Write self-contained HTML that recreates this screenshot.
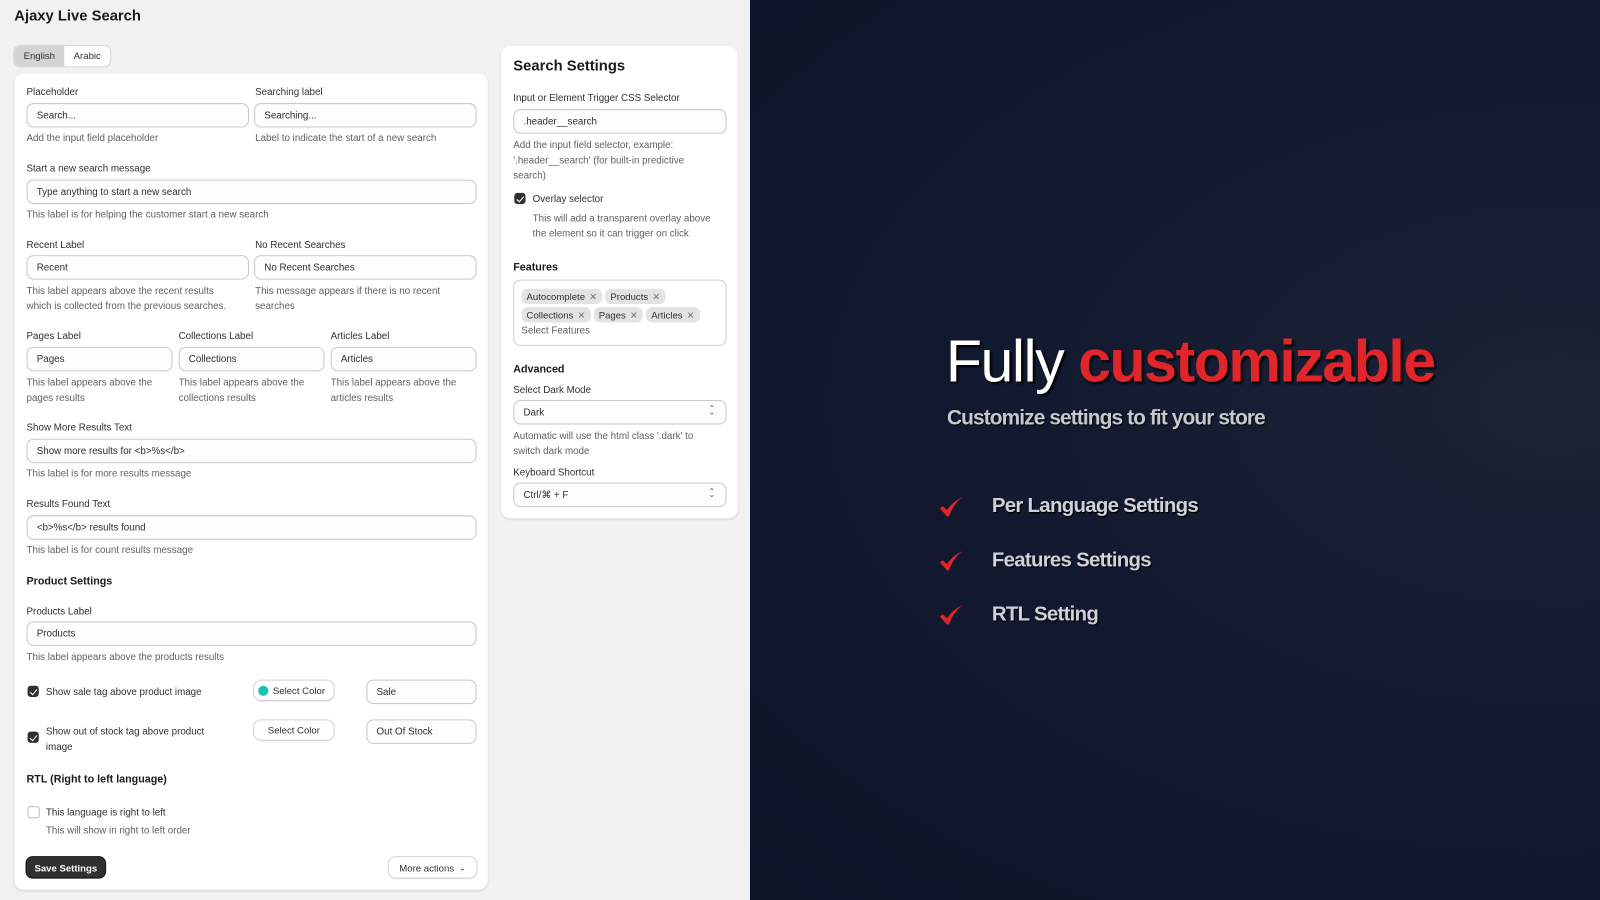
<!DOCTYPE html>
<html><head><meta charset="utf-8"><style>
*{margin:0;padding:0;box-sizing:border-box}
html,body{width:1600px;height:900px;overflow:hidden;background:#f1f1f1}
#w{position:absolute;left:0;top:0;width:1568px;height:882px;transform:scale(1.020408);transform-origin:0 0;font-family:"Liberation Sans",Arial,sans-serif}
.l{position:absolute;left:0;top:0;width:735px;height:882px;background:#f1f1f1}
.d{position:absolute;left:735px;top:0;width:833px;height:882px;background:radial-gradient(ellipse at 95% 45%,#1d2236 0%,#131a30 45%,#0e1428 100%)}
.t{position:absolute;font-size:9.6px;line-height:12px;color:#303030;white-space:nowrap}
.h{color:#616161}
.b{font-weight:bold;color:#1a1a1a;font-size:10.5px}
.card{position:absolute;background:#fff;border-radius:9px;box-shadow:0 1px 2px rgba(0,0,0,.12)}
.in{position:absolute;border:1px solid #c9c9c9;border-radius:7px;background:#fdfdfd;font-size:9.6px;color:#303030;padding-left:9px;display:flex;align-items:center;height:24px}
.cb{position:absolute;width:11px;height:11px;border-radius:3px;background:#303030}
.cb:after{content:"";position:absolute;left:3.5px;top:1.5px;width:3px;height:5.5px;border:solid #fff;border-width:0 1.6px 1.6px 0;transform:rotate(40deg)}
.btn{position:absolute;border-radius:7px;background:#fff;box-shadow:0 0 0 1px #d4d4d4,0 1px 1px rgba(0,0,0,.15);font-size:9.4px;color:#303030;display:flex;align-items:center;justify-content:center}
.tag{display:inline-block;background:#e3e3e3;border-radius:6px;font-size:9.4px;color:#303030;padding:2px 5px;margin-right:3px;line-height:11px}
.tag i{font-style:normal;color:#777;margin-left:4px}
.sel:after{content:"⌃";position:absolute;right:10px;top:3px;font-size:8px;color:#555}
.sel:before{content:"⌄";position:absolute;right:10px;top:6px;font-size:8px;color:#555}
.li{position:absolute;left:972px;font-size:20px;font-weight:bold;color:#cfd1d8;text-shadow:1px 1px 1px #000;letter-spacing:-0.7px}
.ck{position:absolute;left:920px;width:24px;height:22px}
</style></head><body><div id="w">
<div class="l">
<div class="t" style="left:14px;top:7px;font-size:14.5px;line-height:18px;font-weight:bold;color:#1a1a1a">Ajaxy Live Search</div>
<div style="position:absolute;left:14px;top:45px;width:94px;height:20px;border-radius:6px;background:#fff;box-shadow:0 0 0 1px #d4d4d4;overflow:hidden">
<div style="position:absolute;left:0;top:0;width:49px;height:20px;background:#d4d4d4;font-size:9.4px;color:#303030;text-align:center;line-height:20px">English</div>
<div style="position:absolute;left:49px;top:0;width:45px;height:20px;font-size:9.4px;color:#303030;text-align:center;line-height:20px">Arabic</div></div>
<div class="card" style="left:14px;top:72px;width:464px;height:800px"></div>
<div class="t" style="left:26px;top:85px">Placeholder</div>
<div class="t" style="left:250px;top:85px">Searching label</div>
<div class="in" style="left:26px;top:101px;width:218px">Search...</div>
<div class="in" style="left:249px;top:101px;width:218px">Searching...</div>
<div class="t h" style="left:26px;top:130px">Add the input field placeholder</div>
<div class="t h" style="left:250px;top:130px">Label to indicate the start of a new search</div>
<div class="t" style="left:26px;top:160px">Start a new search message</div>
<div class="in" style="left:26px;top:176px;width:441px">Type anything to start a new search</div>
<div class="t h" style="left:26px;top:205px">This label is for helping the customer start a new search</div>
<div class="t" style="left:26px;top:235px">Recent Label</div>
<div class="t" style="left:250px;top:235px">No Recent Searches</div>
<div class="in" style="left:26px;top:250px;width:218px">Recent</div>
<div class="in" style="left:249px;top:250px;width:218px">No Recent Searches</div>
<div class="t h" style="left:26px;top:278px;line-height:15px">This label appears above the recent results<br>which is collected from the previous searches.</div>
<div class="t h" style="left:250px;top:278px;line-height:15px">This message appears if there is no recent<br>searches</div>
<div class="t" style="left:26px;top:324px">Pages Label</div>
<div class="t" style="left:175px;top:324px">Collections Label</div>
<div class="t" style="left:324px;top:324px">Articles Label</div>
<div class="in" style="left:26px;top:340px;width:143px">Pages</div>
<div class="in" style="left:175px;top:340px;width:143px">Collections</div>
<div class="in" style="left:324px;top:340px;width:143px">Articles</div>
<div class="t h" style="left:26px;top:368px;line-height:15px">This label appears above the<br>pages results</div>
<div class="t h" style="left:175px;top:368px;line-height:15px">This label appears above the<br>collections results</div>
<div class="t h" style="left:324px;top:368px;line-height:15px">This label appears above the<br>articles results</div>
<div class="t" style="left:26px;top:414px">Show More Results Text</div>
<div class="in" style="left:26px;top:430px;width:441px">Show more results for &lt;b&gt;%s&lt;/b&gt;</div>
<div class="t h" style="left:26px;top:459px">This label is for more results message</div>
<div class="t" style="left:26px;top:489px">Results Found Text</div>
<div class="in" style="left:26px;top:505px;width:441px">&lt;b&gt;%s&lt;/b&gt; results found</div>
<div class="t h" style="left:26px;top:534px">This label is for count results message</div>
<div class="t b" style="left:26px;top:564px">Product Settings</div>
<div class="t" style="left:26px;top:594px">Products Label</div>
<div class="in" style="left:26px;top:609px;width:441px">Products</div>
<div class="t h" style="left:26px;top:639px">This label appears above the products results</div>
<div class="cb" style="left:27px;top:672px"></div>
<div class="t" style="left:45px;top:673px">Show sale tag above product image</div>
<div class="btn" style="left:249px;top:667px;width:78px;height:19px"><span style="display:inline-block;width:10px;height:10px;border-radius:50%;background:#1cbfb0;margin-right:4px;margin-left:-4px"></span>Select Color</div>
<div class="in" style="left:359px;top:666px;width:108px">Sale</div>
<div class="cb" style="left:27px;top:717px"></div>
<div class="t" style="left:45px;top:710px;line-height:15px">Show out of stock tag above product<br>image</div>
<div class="btn" style="left:249px;top:706px;width:78px;height:19px">Select Color</div>
<div class="in" style="left:359px;top:705px;width:108px">Out Of Stock</div>
<div class="t b" style="left:26px;top:758px">RTL (Right to left language)</div>
<div style="position:absolute;left:27px;top:790px;width:12px;height:12px;border:1px solid #bbb;border-radius:3px;background:#fff"></div>
<div class="t" style="left:45px;top:791px">This language is right to left</div>
<div class="t h" style="left:45px;top:809px">This will show in right to left order</div>
<div style="position:absolute;left:26px;top:840px;width:77px;height:20px;border-radius:6px;background:#303030;box-shadow:0 0 0 1px #111;color:#fff;font-size:9.4px;font-weight:bold;display:flex;align-items:center;justify-content:center">Save Settings</div>
<div class="btn" style="left:381px;top:840px;width:86px;height:20px">More actions <span style="margin-left:5px;font-size:8px">&#8964;</span></div>

<div class="card" style="left:491px;top:45px;width:232px;height:463px"></div>
<div class="t" style="left:503px;top:56px;font-size:14.5px;line-height:18px;font-weight:bold;color:#1a1a1a">Search Settings</div>
<div class="t" style="left:503px;top:91px">Input or Element Trigger CSS Selector</div>
<div class="in" style="left:503px;top:107px;width:209px">.header__search</div>
<div class="t h" style="left:503px;top:135px;line-height:15px">Add the input field selector, example:<br>'.header__search' (for built-in predictive<br>search)</div>
<div class="cb" style="left:504px;top:189px"></div>
<div class="t" style="left:522px;top:190px">Overlay selector</div>
<div class="t h" style="left:522px;top:207px;line-height:15px">This will add a transparent overlay above<br>the element so it can trigger on click</div>
<div class="t b" style="left:503px;top:256px">Features</div>
<div style="position:absolute;left:503px;top:274px;width:209px;height:65px;border:1px solid #d0d0d0;border-radius:7px;padding:6px 0 0 7px">
<div style="height:18px"><span class="tag">Autocomplete<i>✕</i></span><span class="tag">Products<i>✕</i></span></div>
<div style="height:18px"><span class="tag">Collections<i>✕</i></span><span class="tag">Pages<i>✕</i></span><span class="tag">Articles<i>✕</i></span></div>
<div style="font-size:9.6px;color:#616161;margin-top:2px">Select Features</div></div>
<div class="t b" style="left:503px;top:356px">Advanced</div>
<div class="t" style="left:503px;top:377px">Select Dark Mode</div>
<div class="in sel" style="left:503px;top:392px;width:209px">Dark</div>
<div class="t h" style="left:503px;top:420px;line-height:15px">Automatic will use the html class '.dark' to<br>switch dark mode</div>
<div class="t" style="left:503px;top:458px">Keyboard Shortcut</div>
<div class="in sel" style="left:503px;top:473px;width:209px">Ctrl/⌘ + F</div>
</div>

<div class="d">
<div style="position:absolute;left:192px;top:320px;font-family:'Liberation Sans',sans-serif;font-size:58px;line-height:70px;white-space:nowrap;text-shadow:2px 2px 2px #000;letter-spacing:-1.5px"><span style="color:#fff">Fully </span><span style="color:#e0262b;font-weight:bold">customizable</span></div>
<div style="position:absolute;left:193px;top:398px;font-size:20.5px;font-weight:bold;color:#c6c8cf;text-shadow:1px 1px 1px #000;white-space:nowrap;letter-spacing:-0.9px">Customize settings to fit your store</div>
</div>
<svg class="ck" style="top:486px" viewBox="0 0 24 22"><path d="M1 12 L4 10 L8 14 Q13 6 23 1 Q14 8 10 20 L8 20 Z" fill="#e0262b"/></svg>
<svg class="ck" style="top:539px" viewBox="0 0 24 22"><path d="M1 12 L4 10 L8 14 Q13 6 23 1 Q14 8 10 20 L8 20 Z" fill="#e0262b"/></svg>
<svg class="ck" style="top:592px" viewBox="0 0 24 22"><path d="M1 12 L4 10 L8 14 Q13 6 23 1 Q14 8 10 20 L8 20 Z" fill="#e0262b"/></svg>
<div class="li" style="top:485px">Per Language Settings</div>
<div class="li" style="top:538px">Features Settings</div>
<div class="li" style="top:591px">RTL Setting</div>
</div></body></html>
